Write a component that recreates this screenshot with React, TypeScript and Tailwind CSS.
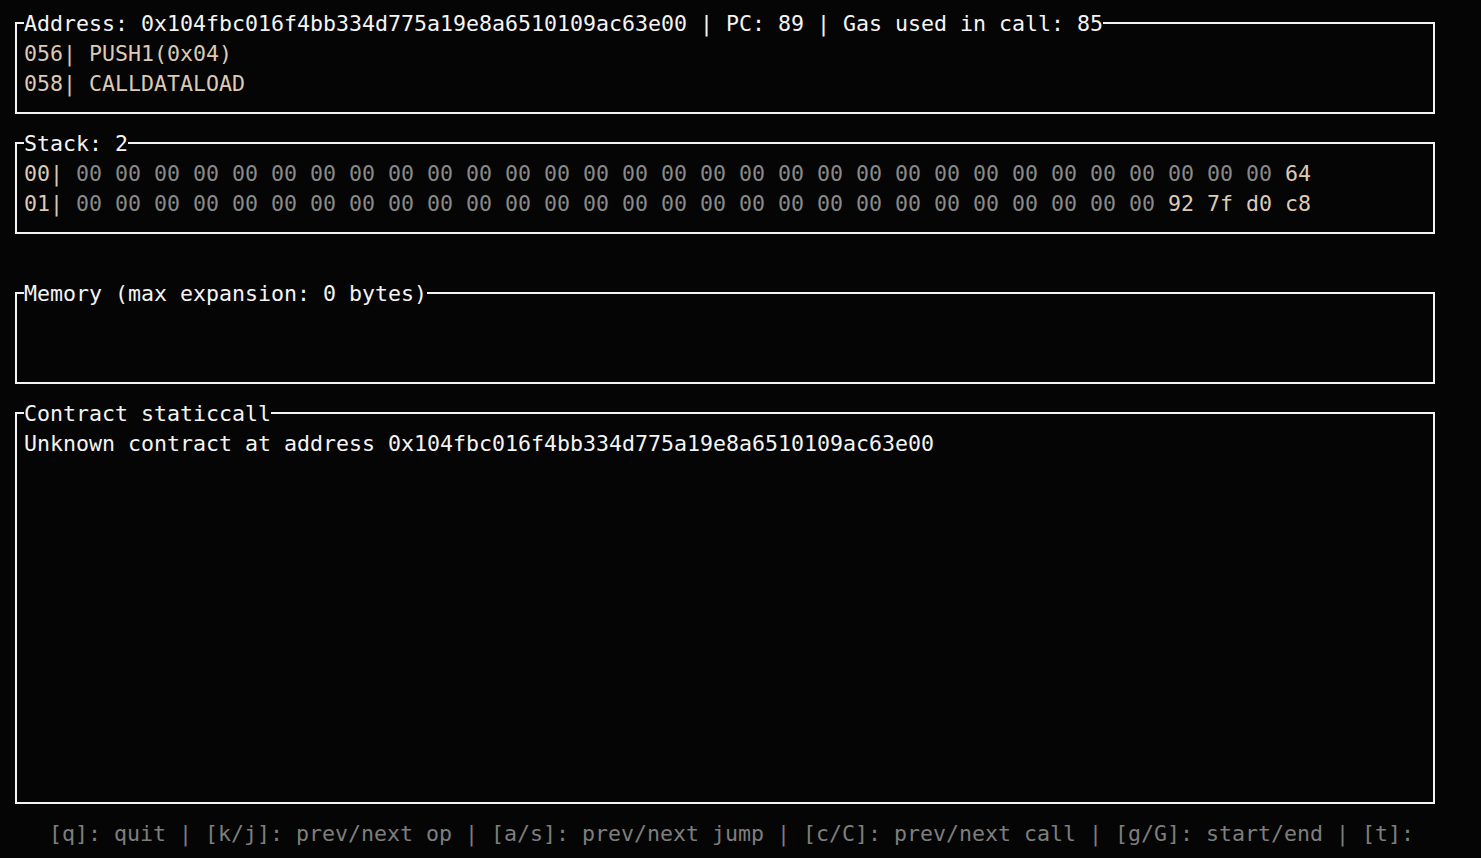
const TAN = 'text-[#dccab6]';
const GRAY = 'text-[#8a8a8a]';

const Box = ({ title, rows, children }: { title: string; rows: number; children?: React.ReactNode }) => {
    return (
        <div className="ml-[15px] w-[1420px] border-2 border-[#f4f4f4] pb-[13px]">
            <div className="-mt-[15px] h-[30px] flex items-center">
                <span className="ml-[7px] bg-[#050505] text-[#f4f4f4] whitespace-pre">{title}</span>
            </div>
            <div className="pl-[7px]" style={{ height: rows * 30 }}>
                {children}
            </div>
        </div>
    );
};

const Row = ({ children }: { children?: React.ReactNode }) => (
    <div className="h-[30px] leading-[30px] whitespace-pre">{children}</div>
);

const zeros = (n: number) => Array(n).fill('00').join(' ') + ' ';

export default function App() {
    const address = '0x104fbc016f4bb334d775a19e8a6510109ac63e00';
    return (
        <div
            className="w-[1481px] h-[858px] overflow-hidden bg-[#050505] text-[21.6px] pt-[22px]"
            style={{ fontFamily: '"DejaVu Sans Mono", "Liberation Mono", monospace' }}
        >
            <Box title={`Address: ${address} | PC: 89 | Gas used in call: 85`} rows={2}>
                <Row><span className={TAN}>056| PUSH1(0x04)</span></Row>
                <Row><span className={TAN}>058| CALLDATALOAD</span></Row>
            </Box>

            <div className="mt-[28px]">
                <Box title="Stack: 2" rows={2}>
                    <Row>
                        <span className={TAN}>00| </span>
                        <span className={GRAY}>{zeros(31)}</span>
                        <span className={TAN}>64</span>
                    </Row>
                    <Row>
                        <span className={TAN}>01| </span>
                        <span className={GRAY}>{zeros(28)}</span>
                        <span className={TAN}>92 7f d0 c8</span>
                    </Row>
                </Box>
            </div>

            <div className="mt-[58px]">
                <Box title="Memory (max expansion: 0 bytes)" rows={2} />
            </div>

            <div className="mt-[28px]">
                <Box title="Contract staticcall" rows={12}>
                    <Row><span className="text-[#f4f4f4]">Unknown contract at address {address}</span></Row>
                </Box>
            </div>

            <div className="mt-[15px] pl-[49px] h-[30px] leading-[30px] whitespace-pre text-[#7e7e7e]">
                [q]: quit | [k/j]: prev/next op | [a/s]: prev/next jump | [c/C]: prev/next call | [g/G]: start/end | [t]:
            </div>
        </div>
    );
}
